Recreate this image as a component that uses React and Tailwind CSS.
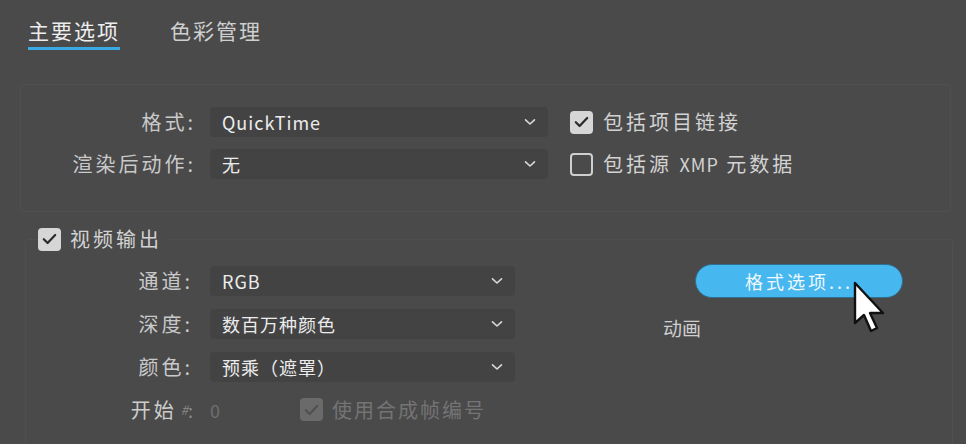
import React from 'react'

const font = { fontFamily: '"Noto Sans CJK SC", "Noto Sans", sans-serif' }

const Chevron = () => (
  <svg width="12" height="8" viewBox="0 0 12 8" fill="none" stroke="#d8d8d8" strokeWidth="1.6" strokeLinecap="round" strokeLinejoin="round">
    <path d="M1.5 1.8L6 6l4.5-4.2" />
  </svg>
)

const Select = ({ value, width }) => (
  <div className={`flex items-center justify-between h-[30px] rounded-[4px] bg-[#434344] pl-[12px] pr-[12px] ${width}`}>
    <span className="text-[18px] text-[#ececec] tracking-[1px] leading-none">{value}</span>
    <Chevron />
  </div>
)

const Checkbox = ({ checked, disabled }) => {
  if (checked) {
    return (
      <div className={`w-[23px] h-[23px] rounded-[4px] flex items-center justify-center shrink-0 ${disabled ? 'bg-[#6a6a6b]' : 'bg-[#d6d6d7]'}`}>
        <svg width="15" height="12" viewBox="0 0 15 12" fill="none" stroke={disabled ? '#505051' : '#2a2a2b'} strokeWidth="2.2" strokeLinecap="round" strokeLinejoin="round">
          <path d="M1.8 6.2l3.8 3.8L13.2 2" />
        </svg>
      </div>
    )
  }
  return <div className="w-[23px] h-[23px] rounded-[4px] border-2 border-[#cfcfd0] shrink-0" />
}

const Label = ({ children, width }) => (
  <div className={`text-right text-[20px] text-[#c9c9c9] tracking-[3px] leading-none shrink-0 ${width}`}>{children}</div>
)

const Cursor = () => (
  <svg width="38" height="56" viewBox="0 0 38 56" className="absolute left-[852px] top-[281px]">
    <path d="M3 2 L3 42 L12 34 L19 50 L25 47 L18 32 L31 32 Z" fill="#ffffff" stroke="#111111" strokeWidth="2.4" strokeLinejoin="round" />
  </svg>
)

export default function App() {
  return (
    <div className="relative w-[966px] h-[444px] overflow-hidden bg-[#4a4a4b] pt-[17px]" style={font}>
      {/* onglets */}
      <div className="flex pl-[28px] gap-[50px]">
        <div className="text-[21px] leading-[26px] tracking-[2px] text-[#eeeeee] pb-[4px] border-b-[3px] border-[#3aa9e4]">主要选项</div>
        <div className="text-[21px] leading-[26px] tracking-[2px] text-[#cfcfcf]">色彩管理</div>
      </div>

      {/* panneau format */}
      <div className="ml-[20px] mt-[34px] w-[931px] h-[128px] border border-[#4f4f50] rounded-[2px] pt-[22px]">
        <div className="flex items-center">
          <Label width="w-[175px]">格式:</Label>
          <div className="ml-[14px]"><Select value="QuickTime" width="w-[338px]" /></div>
          <div className="ml-[22px] flex items-center gap-[10px]">
            <Checkbox checked />
            <span className="text-[20px] tracking-[3px] text-[#d2d2d2] leading-none">包括项目链接</span>
          </div>
        </div>
        <div className="flex items-center mt-[12px]">
          <Label width="w-[175px]">渲染后动作:</Label>
          <div className="ml-[14px]"><Select value="无" width="w-[338px]" /></div>
          <div className="ml-[22px] flex items-center gap-[10px]">
            <Checkbox />
            <span className="text-[20px] tracking-[3px] text-[#d2d2d2] leading-none">
              包括源 <span className="text-[18px] tracking-[1px]">XMP</span> 元数据
            </span>
          </div>
        </div>
      </div>

      {/* sortie vidéo */}
      <fieldset className="ml-[25px] mt-[14px] w-[928px] h-[260px] border border-[#4f4f50] rounded-[2px] px-[12px]">
        <legend className="pr-[6px]">
          <div className="flex items-center gap-[9px] h-[26px]">
            <Checkbox checked />
            <span className="text-[20px] tracking-[3px] text-[#d2d2d2] leading-none">视频输出</span>
          </div>
        </legend>

        <div className="flex mt-[14px]">
          <div className="flex flex-col">
            <div className="flex items-center">
              <Label width="w-[155px]">通道:</Label>
              <div className="ml-[17px]"><Select value="RGB" width="w-[305px]" /></div>
            </div>
            <div className="flex items-center mt-[13px]">
              <Label width="w-[155px]">深度:</Label>
              <div className="ml-[17px]"><Select value="数百万种颜色" width="w-[305px]" /></div>
            </div>
            <div className="flex items-center mt-[13px]">
              <Label width="w-[155px]">颜色:</Label>
              <div className="ml-[17px]"><Select value="预乘（遮罩）" width="w-[305px]" /></div>
            </div>
            <div className="flex items-center mt-[16px]">
              <div className="w-[155px] flex justify-end items-center text-[20px] leading-none">
                <span className="text-[#cdcdcd] tracking-[3px]">开始</span>
                <span className="ml-[4px] text-[13px] text-[#8a8a8a] italic">#</span>
                <span className="text-[#8a8a8a] text-[18px]">:</span>
              </div>
              <span className="ml-[17px] text-[18px] text-[#6e6e6f] leading-none">0</span>
              <div className="ml-[80px] flex items-center gap-[9px]">
                <Checkbox checked disabled />
                <span className="text-[20px] tracking-[2px] text-[#747475] leading-none">使用合成帧编号</span>
              </div>
            </div>
          </div>

          <div className="flex flex-col ml-[148px] -mt-[2px]">
            <button className="ml-[32px] w-[208px] h-[34px] rounded-full bg-[#47b7ef] border-[1.5px] border-[#2f6f90] text-[18px] tracking-[3px] text-[#eef8fe] leading-none">
              格式选项...
            </button>
            <span className="mt-[20px] text-[19px] text-[#cfcfcf] leading-none">动画</span>
          </div>
        </div>
      </fieldset>

      <Cursor />
    </div>
  )
}
